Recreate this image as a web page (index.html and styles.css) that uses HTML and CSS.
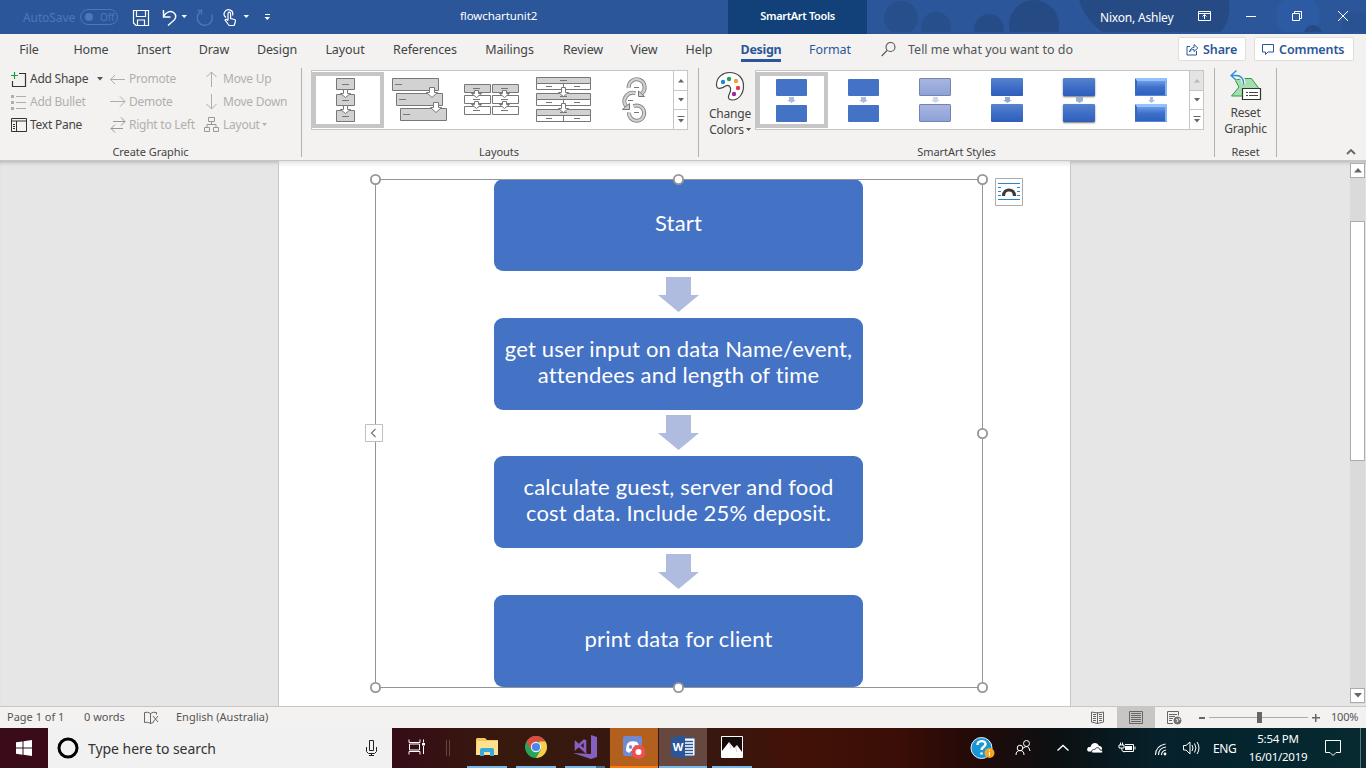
FILE: index.html
```html
<!DOCTYPE html>
<html lang="en">
<head>
<meta charset="utf-8">
<title>flowchartunit2</title>
<link rel="stylesheet" href="styles.css">
</head>
<body>
<div class="screen">
<header class="titlebar">
  <div class="quick">
    <span class="autosave">AutoSave</span>
    <span class="toggle"><i></i>Off</span>
    <svg class="qicons" width="150" height="34" viewBox="130 0 150 34" fill="none" stroke="#fff">
      <path d="M133.500 10.500h15v15h-12.500l-2.500-2.500zM136.500 10.500v6h9v-6M137.500 25v-5h7v5" stroke-width="1.200"/>
      <path d="M163.500 10v7h7M163.500 16.500c3-5 7-6 10-4c4 3 2 7-1 9l-4.500 4" stroke-width="1.400"/>
      <path d="M181.500 15h5.500l-2.750 3zM243.500 15h5.500l-2.750 3zM264.500 17h5.500l-2.750 3z" fill="#fff" stroke="none"/><path d="M265 14.500h5"/>
      <path d="M211.500 14.500a7.500 7.500 0 1 1-11.500-2.500M197.500 10.500h4v4" stroke="#4c78b9" stroke-width="1.400"/>
      <path d="M226 17.500a4.300 4.300 0 1 1 6.500-2M228 20v-6c0-2.500 2.600-2.500 2.600 0v4.500l4 1c1 .3 1 1.500.5 3l-1 3h-5l-4-5.500c1-1 2-.5 3 .8" stroke-width="1.200"/>
    </svg>
  </div>
  <div class="doctitle">flowchartunit2</div>
  <div class="context">SmartArt Tools</div>
  <div class="account">
    <svg class="pattern" width="499" height="34" viewBox="867 0 499 34"><g fill="#264a83"><g opacity=".6"><circle cx="901" cy="18" r="17"/><circle cx="936" cy="27" r="15"/></g><circle cx="989" cy="29" r="15" opacity=".8"/><circle cx="1034" cy="25" r="25"/><path d="M1079 0h150q3 20-10 34h-114q-20-14-26-34z"/><circle cx="1360" cy="30" r="19" opacity=".35"/></g><circle cx="1298" cy="16" r="22" fill="#2c5ba3"/><circle cx="1313" cy="34" r="9" fill="#264a83"/><path d="M867 33h499" stroke="#2a5699" stroke-width="2"/></svg>
    <span class="username">Nixon, Ashley</span>
    <svg class="winicons" width="166" height="34" viewBox="1200 0 166 34" fill="none" stroke="#fff"><path d="M1198.500 11.500h12v9h-12zM1198.500 13.500h12M1204.500 19v-4.500M1202.500 16.500l2-2l2 2M1246 16.500h10M1292.500 13.500h7v7h-7zM1294.500 13.500v-2h7v7h-2M1338 11l10 10M1348 11l-10 10"/></svg>
  </div>
</header>
<nav class="tabs">
  <div class="tablist"><span>File</span><span>Home</span><span>Insert</span><span>Draw</span><span>Design</span><span>Layout</span><span>References</span><span>Mailings</span><span>Review</span><span>View</span><span>Help</span><span class="active"><b>Design</b></span><span class="blue">Format</span></div>
  <div class="tell"><svg width="16" height="16" fill="none" stroke="#555" stroke-width="1.100"><circle cx="9.500" cy="6" r="4.500"/><path d="M6 9.500L.7 15"/></svg><span>Tell me what you want to do</span></div>
  <div class="tabbuttons">
    <button class="share"><svg width="13" height="13" fill="none" stroke="#2b579a"><path d="M4 3.500H1v8.500h9.500V8M3.500 9C4 6 6 4.500 8 4.500v-3L11.800 5L8 8.500v-2C6 6.500 4.500 7 3.500 9z"/></svg>Share</button>
    <button class="comments"><svg width="13" height="13" fill="none" stroke="#2b579a"><path d="M.5 1.500h11v7.500H6L3.500 11.500V9h-3z"/></svg>Comments</button>
  </div>
</nav>
<section class="ribbon">
  <div class="group create">
    <div class="commands">
      <span class="cmd"><svg width="18" height="18"><path d="M9 3.500h6.500v13h-13V11" fill="none" stroke="#333" stroke-width="1.200"/><path d="M4.500 2v7M1 5.500h7" stroke="#1b9c4c" stroke-width="1.200"/></svg><em class="w-add">Add Shape</em><svg class="caret" width="6" height="4"><path d="M0 0h6L3 3.500z" fill="#555"/></svg></span>
      <span class="cmd off"><svg width="16" height="18" fill="none" stroke="#b0aeac"><path d="M0.500 9.500l4.500-4.500M.5 9.500l4.500 4.500M.5 9.500h14.500" /></svg><em>Promote</em></span>
      <span class="cmd off"><svg width="16" height="18" fill="none" stroke="#b0aeac"><path d="M7.500 17V2M2.500 7l5-5l5 5"/></svg><em>Move Up</em></span>
      <span class="cmd off"><svg width="18" height="18"><path d="M6 3.500h10M6 9.500h10M6 15.500h10" stroke="#b0aeac"/><path d="M1 2h3v3H1zM1 8h3v3H1zM1 14h3v3H1z" fill="#b0aeac"/></svg><em>Add Bullet</em></span>
      <span class="cmd off"><svg width="16" height="18" fill="none" stroke="#b0aeac"><path d="M0 8.500h15M10 3.500l5 5l-5 5"/></svg><em>Demote</em></span>
      <span class="cmd off"><svg width="16" height="18" fill="none" stroke="#b0aeac"><path d="M7.500 1v15M2.500 11l5 5l5-5"/></svg><em>Move Down</em></span>
      <span class="cmd"><svg width="18" height="18" fill="none" stroke="#333"><path d="M1.500 2.500h15v13h-15zM1.500 5h15M6.500 5v10.500M3 8.500h2M3 10.500h2M3 12.500h2"/></svg><em>Text Pane</em></span>
      <span class="cmd off"><svg width="16" height="18" fill="none" stroke="#9a9896"><path d="M3 5.500h12M11 1.500l4 4l-4 4M13 12.500H1M5 8.500l-4 4l4 4"/></svg><em>Right to Left</em></span>
      <span class="cmd off"><svg width="16" height="18" fill="none" stroke="#9a9896"><path d="M4.500 1.500h6v4h-6zM.5 11.500h5v4h-5zM9.500 11.500h5v4h-5zM7.500 5.500v3M3 11.500v-3h9v3"/></svg><em>Layout</em><svg class="caret tight" width="5" height="4"><path d="M0 0h5L2.500 3z" fill="#b0aeac"/></svg></span>
    </div>
    <div class="glabel">Create Graphic</div>
  </div>
  <div class="group layouts">
    <div class="gallery">
      <div class="cell selected"><svg width="72" height="58" viewBox="312 71 72 58" fill="#d2d2d2" stroke="#777"><path d="M336.500 78.500h18v11h-18zM336.500 94.500h18v11h-18zM336.500 110.500h18v11h-18zM342 84.500h7M342 100.500h7M342 116.500h7"/><path id="a" fill="#fff" d="M343.500 89.500h4v4h3l-5 4l-5-4h3z"/><use href="#a" y="16"/></svg></div>
      <div class="cell"><svg width="72" height="58" viewBox="384 71 72 58" fill="#d2d2d2" stroke="#777"><path d="M392.500 78.500h46v12h-46zM396.500 93.500h46v12h-46zM400.500 108.500h46v12h-46zM395 84.500h7M399 99.500h7M403 114.500h7"/><path id="b" fill="#fff" d="M429.500 87.500h5v5h3l-5.500 5l-5.500-5h3z"/><use href="#b" x="4" y="15"/></svg></div>
      <div class="cell"><svg width="72" height="58" viewBox="456 71 72 58" fill="#fff" stroke="#777"><g id="c"><path d="M464.500 84.500h26v8h-26z" fill="#d2d2d2"/><path d="M464.500 95.500h26v8h-26zM464.500 106.500h26v8h-26zM473 88.500h7M473 99.500h7M473 110.500h7"/><path d="M474.500 90.500h4v3h3l-5 4l-5-4h3zM474.500 101.500h4v3h3l-5 4l-5-4h3z"/></g><use href="#c" x="28"/></svg></div>
      <div class="cell"><svg width="72" height="58" viewBox="528 71 72 58" fill="#fff" stroke="#777"><g id="d"><path d="M536.500 77.500h54v6h-54z" fill="#d2d2d2"/><path d="M536.500 83.500h54v6h-54zM563.500 83.500v6M560 80.500h7M546 86.500h6M574 86.500h6"/></g><use href="#d" y="16"/><use href="#d" y="32"/><path id="e" d="M561.500 87.500h4v5h3l-5 4l-5-4h3z"/><use href="#e" y="16"/></svg></div>
      <div class="cell"><svg width="72" height="58" viewBox="600 71 72 58" fill="none"><g stroke="#858585" stroke-width="4"><path id="f" d="M628.700 88a8 8 0 1 1 13 5.500M635.500 93.200a8.500 8.500 0 0 0-9.500 13M629 112.500a7.600 7.600 0 1 0 4.500-6.300"/></g><use href="#f" stroke="#d2d2d2" stroke-width="2.200"/><path d="M638.500 91v5.500h6zM622.500 109.500h7v-6z" fill="#d2d2d2" stroke="#777"/><path d="M634 87.500h5M628 100.500h5M634 112.500h5" stroke="#777"/></svg></div>
      <div class="scroller"><span><svg width="6" height="4"><path d="M0 3.500h6L3 0z" fill="#666"/></svg></span><span><svg width="6" height="4"><path d="M0 0h6L3 3.500z" fill="#666"/></svg></span><span><svg width="8" height="7"><path d="M1 3h6L4 6.500zM.5 0h7v1h-7z" fill="#666"/></svg></span></div>
    </div>
    <div class="glabel">Layouts</div>
  </div>
  <div class="group styles">
    <div class="stylerow">
    <div class="bigbtn colors"><svg width="30" height="30" viewBox="0 0 30 30"><path d="M1.500 13C2 6 8 1.500 14.500 1.500C23 1.500 28.500 7 28.500 15c0 8-5 14-11 14c-7 0-3-6-2-9c1-4-2-7-5-5C8 17 1 20 1.500 13z" fill="#fff" stroke="#444" stroke-width="1.200"/><circle cx="8" cy="11" r="2.200" fill="#1e8bcd"/><circle cx="14" cy="8" r="2.200" fill="#1fa34a"/><circle cx="21" cy="10" r="2.200" fill="#fb983b"/><circle cx="23" cy="17" r="2.200" fill="#e8393c"/><circle cx="19" cy="23" r="2.200" fill="#922c9d"/></svg><span>Change</span><span>Colors<svg class="caret" width="5" height="4"><path d="M0 0h5L2.500 3z" fill="#555"/></svg></span></div>
    <div class="gallery">
      <div class="cell selected"><div class="mini"><i></i><svg width="9" height="6"><path d="M2 0h5v3h2L4.500 6L0 3h2z" fill="#adbbe0"/></svg><i></i></div></div>
      <div class="cell"><div class="mini"><i></i><svg width="9" height="6"><path d="M2 0h5v3h2L4.500 6L0 3h2z" fill="#adbbe0"/></svg><i></i></div></div>
      <div class="cell"><div class="mini pale"><i></i><svg width="9" height="6"><path d="M2 0h5v3h2L4.500 6L0 3h2z" fill="#cfd7ed"/></svg><i></i></div></div>
      <div class="cell"><div class="mini deep"><i></i><svg width="9" height="6"><path d="M2 0h5v3h2L4.500 6L0 3h2z" fill="#93a8da"/></svg><i></i></div></div>
      <div class="cell"><div class="mini deep shadow"><i></i><svg width="9" height="6"><path d="M1 0h7v4L4.500 6L1 4z" fill="#9dafd9"/></svg><i></i></div></div>
      <div class="cell"><div class="mini bevel"><i></i><svg width="9" height="6"><path d="M3 0h3v3h2L4.500 6L1 3h2z" fill="#adbbe0"/></svg><i></i></div></div>
      <div class="scroller"><span class="dis"><svg width="6" height="4"><path d="M0 3.500h6L3 0z" fill="#b8b8b8"/></svg></span><span><svg width="6" height="4"><path d="M0 0h6L3 3.500z" fill="#666"/></svg></span><span><svg width="8" height="7"><path d="M1 3h6L4 6.500zM.5 0h7v1h-7z" fill="#666"/></svg></span></div>
    </div>
    </div>
    <div class="glabel">SmartArt Styles</div>
  </div>
  <div class="group reset">
    <div class="bigbtn"><svg width="32" height="32" viewBox="0 0 32 32"><path d="M13 8.500h8.500L30 20v6H1.500L9 17l-4-7z" fill="#a3dfae" stroke="#36964f"/><path d="M1 5.500h5c5 0 8 3 7.500 8.500M6 1L1 5.500L6 10" fill="none" stroke="#f3f2f1" stroke-width="4"/><path d="M1 5.500h5c5 0 8 3 7.500 9M6.500 .5L1 5.500L6 10" fill="none" stroke="#2d8fd0" stroke-width="1.400"/><path d="M12.500 18.500h18v11h-18z" fill="#fff" stroke="#333" stroke-width="1.200"/><path d="M16 22.500h2M19 22.500h9M16 25.500h2M19 25.500h9" stroke="#444"/></svg><span>Reset</span><span>Graphic</span></div>
    <div class="glabel">Reset</div>
  </div>
  <svg class="collapse" width="10" height="6" fill="none" stroke="#666" stroke-width="1.800"><path d="M1 5l4-4l4 4"/></svg>
</section>
<main class="canvas">
  <div class="page">
    <div class="smartart">
      <div class="node">Start</div>
      <svg class="arrow" width="41" height="35"><path d="M8 0h25v18h8L20.500 35L0 18h8z"/></svg>
      <div class="node">get user input on data Name/event,<br>attendees and length of time</div>
      <svg class="arrow" width="41" height="35"><path d="M8 0h25v18h8L20.500 35L0 18h8z"/></svg>
      <div class="node">calculate guest, server and food<br>cost data. Include 25% deposit.</div>
      <svg class="arrow" width="41" height="35"><path d="M8 0h25v18h8L20.500 35L0 18h8z"/></svg>
      <div class="node">print data for client</div>
      <svg class="handles" width="622" height="524" viewBox="368 172 622 524" fill="#fff" stroke="#959595" stroke-width="1.800"><path d="M375.500 179.500h607v508h-607z" fill="none" stroke-width="1"/><circle cx="375.500" cy="179.500" r="4.600"/><circle cx="678.500" cy="179.500" r="4.600"/><circle cx="982.500" cy="179.500" r="4.600"/><circle cx="982.500" cy="433.500" r="4.600"/><circle cx="375.500" cy="687.500" r="4.600"/><circle cx="678.500" cy="687.500" r="4.600"/><circle cx="982.500" cy="687.500" r="4.600"/></svg>
      <svg class="pane-toggle" width="18" height="18"><path d="M.5.500h17v17H.5z" fill="#fff" stroke="#c0c0c0"/><path d="M10.500 5l-4 4l4 4" fill="none" stroke="#777" stroke-width="1.200"/></svg>
      <svg class="layout-opt" width="28" height="28"><path d="M.5.500h27v27H.5z" fill="#fff" stroke="#ababab"/><path d="M3 5.500h22M3 9.500h3M22 9.500h3M3 13.500h3M22 13.500h3M3 17.500h3M22 17.500h3M3 21.500h22" stroke="#2a86c0"/><path d="M8.500 18c0-8 11-8 11 0" fill="none" stroke="#3b3b3b" stroke-width="3.200"/></svg>
    </div>
  </div>
  <div class="vscroll"><span><svg width="8" height="5"><path d="M0 4.500h8L4 0z" fill="#666"/></svg></span><i></i><span><svg width="8" height="5"><path d="M0 0h8L4 4.500z" fill="#666"/></svg></span></div>
</main>
<footer class="status">
  <span class="s-page">Page 1 of 1</span><span class="s-words">0 words</span>
  <svg class="proof" width="15" height="14" fill="none" stroke="#666"><path d="M6.500 2.500Q4 .5.500 1.500v10q3.500-1 6 1v-10Q9 .5 12.500 1.500v2M6.500 12.500l3-1M9 5l5 6M14 5l-5 6" /></svg>
  <span class="s-lang">English (Australia)</span>
  <div class="views">
    <span><svg width="14" height="14" fill="none" stroke="#666"><path d="M6.500 2L.5 1v10l6 1.500l6-1.500V1zM6.500 1v12M2 3.500h3M2 5.500h3M2 7.500h3M2 9.500h3M8 3.500h3M8 5.500h3M8 7.500h3M8 9.500h3"/></svg></span>
    <span class="on"><svg width="14" height="14" fill="none" stroke="#666"><path d="M.5.500h13v12H.5zM2 2.500h10M2 4.500h10M2 6.500h10M2 8.500h10M2 10.500h10"/></svg></span>
    <span><svg width="15" height="14" fill="none" stroke="#666"><path d="M6 12.500H.5V.5h11v4M2 3.500h8M2 5.500h6M2 7.500h4M2 9.500h3"/><circle cx="10.500" cy="9.500" r="3.500" fill="#777"/><path d="M9 8l2 1l-1 2M12 7l1 2" stroke="#eee"/></svg></span>
  </div>
  <svg class="zoomer" width="122" height="22" viewBox="1198 706 122 22"><path d="M1209 716.500h99" stroke="#aaa"/><path d="M1199 716h6v2h-6zM1312 716h8v1.500h-8zM1315 713h1.500v8h-1.500zM1257 711h5v11h-5z" fill="#666"/></svg>
  <span class="s-zoom">100%</span>
</footer>
<div class="taskbar">
  <div class="start"><svg width="16" height="16" fill="#fff"><path d="M0 2.300L6.500 1.400V7.500H0zM7.500 1.200L16 0v7.500H7.500zM0 8.500h6.500v6.200L0 13.800zM7.500 8.500H16V16l-8.500-1.200z"/></svg></div>
  <div class="search"><svg width="22" height="22"><circle cx="11" cy="11" r="9" fill="none" stroke="#000" stroke-width="3"/></svg><span>Type here to search</span><svg class="mic" width="11" height="16" fill="none" stroke="#222"><path d="M3.500.5h4v10h-4zM.5 7v4.500l2 2h6l2-2V7M5.500 13.500v2M3 15.500h5"/></svg></div>
  <div class="apps">
    <div class="app view"><svg width="17" height="16" fill="none" stroke="#fff"><path d="M1 .5v3h11v-3M1 15.500v-3h11v3M1.500 5h10v6h-10zM15.500.5v3M15.500 7v8"/><path d="M14 4h3v2.500h-3z" fill="#fff" stroke="none"/></svg></div>
    <div class="grip"></div>
    <div class="app run"><svg width="22" height="20"><path d="M0 2l1-1h8l2 2h11v15H0z" fill="#f3c85c"/><path d="M1 4h21v14H0z" fill="#fde18e"/><path d="M4 19v-6q0-2 2-2h10q2 0 2 2v6h-4v-4H8v4z" fill="#37a9df"/></svg></div>
    <div class="app run"><svg width="22" height="22"><circle cx="11" cy="11" r="11" fill="#27a35a"/><path d="M1.500 5.500A11 11 0 0 1 20.500 5.500H11L6 13.500z" fill="#e04a3f"/><path d="M20.500 5.500A11 11 0 0 1 11 22l5-8.500L14 5.500z" fill="#fccd47"/><circle cx="11" cy="11" r="5.200" fill="#f4f4f4"/><circle cx="11" cy="11" r="4.100" fill="#4688ef"/></svg></div>
    <div class="app multi"><svg width="24" height="24"><path d="M18 0l6 2v20l-6 2L0 18l18 1z" fill="#865fc5"/><path d="M12 5v11L3 8v5L12 5" fill="none" stroke="#865fc5" stroke-width="2.600"/></svg></div>
    <div class="app discord"><svg width="24" height="24"><rect x="1" y="1" width="19" height="20" rx="2" fill="#7288cf"/><path d="M4 16c0-5 1-8 3-9q4-1.500 8 0c2 2 3 6 2 9l-3 2l-2-2H9l-2 2z" fill="#fff"/><ellipse cx="8.500" cy="12" rx="1.600" ry="2" fill="#7288cf"/><ellipse cx="14" cy="12" rx="1.600" ry="2" fill="#7288cf"/><circle cx="16.500" cy="17" r="7" fill="#ee5050"/><circle cx="16.500" cy="17" r="3" fill="#fff"/></svg></div>
    <div class="app word"><svg width="24" height="24"><path d="M13 3h11v18H13z" fill="#fff" stroke="#2a5699"/><path d="M14 6.500h8M14 9.500h8M14 12.500h8M14 15.500h8M14 18.500h8" stroke="#2a5699" stroke-width="1.400"/><path d="M0 3L14 0v24L0 21z" fill="#2a5699"/><text x="7" y="16" text-anchor="middle" class="wletter">W</text></svg></div>
    <div class="app run photos"><svg width="22" height="22"><path d="M.5.500h21v21H.500z" fill="#160b09" stroke="#fff"/><path d="M1 15l7-9l5 6l3-3l5 7v5H1z" fill="#fff"/><path d="M8 7l2 4l-1 2M15 10v3l1 3" stroke="#bbb" fill="none" stroke-width=".7"/></svg></div>
  </div>
  <div class="tray">
    <svg width="256" height="40" viewBox="960 728 256 40" fill="none" stroke="#fff"><circle cx="981.500" cy="748" r="10.500" fill="#1a96d5" stroke="#e4f4fb"/><path d="M977.500 745c0-5 8-5 8-1c0 3-4 3-4 6M981.500 752.500v2" stroke-width="2.400"/><circle cx="989.500" cy="753" r="5" fill="#f6a623" stroke="none"/><path d="M989.500 750v1M989.500 752v4"/><circle cx="1020" cy="748" r="2.800"/><circle cx="1026.500" cy="743.500" r="3"/><path d="M1016 755q0-4.500 4-4.500t4 4.500M1022.500 748.500q6-5 7.500 2.500"/><path d="M1057.500 750.500l5.500-5l5.500 5" stroke-width="1.400"/><path d="M1088 751.500c-2-3 0-5 2.500-4.500c1-5 7-5 8.500-1c3 0 4 2.500 2 5.500z" fill="#fff" stroke="none"/><path d="M1092 753c-1-3 1-4 3-3.500c1-3 5-2 5 .5c3 0 3 2 2 3z" fill="#fff" stroke="#06151b" stroke-width=".8"/><path d="M1125 744.500h8.500v7H1124M1135 746.500v3M1119 745v3h5v-3zM1120.500 745v-2.500M1122.500 745v-2.500M1121.500 748q0 4 3 4"/><path d="M1125 746h7v4h-7z" fill="#fff" stroke="none"/><path d="M1155.500 755q0-9 10-11M1158.500 755q0-7 7.500-8M1161.500 755q0-4 4.500-5" stroke-width="1.100"/><circle cx="1165" cy="754" r="1.400" fill="#fff" stroke="none"/><path d="M1183.500 745.500h2.500l4-3.500v12l-4-4h-2.500zM1192 745q2 3 0 6M1194.500 743.500q3 4.500 0 9M1197 742q4 6 0 12"/></svg>
    <span class="eng">ENG</span>
    <div class="clock"><span class="time">5:54 PM</span><span class="date">16/01/2019</span></div>
    <svg class="notice" width="16" height="17" fill="none" stroke="#fff"><path d="M.5.500h15v12H11L8 15.500L5 12.500H.5z"/></svg>
    <i class="desk"></i>
  </div>
</div>
</div>
</body>
</html>
```
FILE: styles.css
```css
*{box-sizing:border-box}
body{margin:0;font-family:"Noto Sans","Open Sans",sans-serif;font-size:12px;color:#444;overflow:hidden}
svg{display:block;flex:none}
span,em,b{white-space:nowrap}
em{font-style:normal}
.screen{width:1366px;height:768px;display:flex;flex-direction:column;overflow:hidden}
.titlebar{height:34px;flex:none;background:#2b579a;color:#fff;display:grid;grid-template-columns:290px 438px 139px 499px;font-size:11.5px;letter-spacing:-.1px}
.quick{display:flex;align-items:center;padding-left:23px}
.autosave{color:#4c78b9;width:57px;font-size:12px;letter-spacing:-.1px}
.toggle{width:38px;height:16px;border:1px solid #4c78b9;border-radius:8px;color:#4c78b9;display:flex;align-items:center;font-size:10px;gap:7px;padding-left:4px}
.toggle i{width:8px;height:8px;border-radius:50%;background:#4c78b9}
.qicons{margin-left:12px}
.doctitle{display:flex;align-items:center;padding-left:170px;padding-bottom:3px}
.context{background:#124078;display:flex;align-items:center;justify-content:center;padding-bottom:3px;font-weight:600;font-size:11px;letter-spacing:-.35px}
.account{display:flex;align-items:center;position:relative}
.pattern{position:absolute;left:0;top:0}
.username{position:relative;padding-left:233px;width:333px;font-size:12px;letter-spacing:-.2px}
.winicons{position:relative;overflow:visible}
.tabs{height:32px;flex:none;background:#f3f2f1;display:flex;align-items:center;font-size:12.5px;letter-spacing:-.1px}
.tablist{display:grid;grid-template-columns:38px 86px 40px 80px 46px 90px 70px 99px 48px 74px 36px 88px 50px;padding-left:10px;height:32px}
.tablist span{display:flex;justify-content:center;align-items:center;padding-bottom:2px}
.active,.blue{color:#2b579a}
.tablist .active{padding:0}
.active b{height:24px;line-height:17px;padding-top:3px;border-bottom:3px solid #2b579a;letter-spacing:-.3px}
.tell{display:flex;align-items:center;width:324px;padding-left:26px;gap:11px;letter-spacing:0;color:#555;padding-bottom:2px}
.tabbuttons{display:flex;gap:8px;margin-bottom:2px}
.tabbuttons button{height:24px;border:1px solid #e1dfdd;border-radius:2px;background:#fff;color:#2b579a;font:600 12.5px "Noto Sans",sans-serif;display:flex;align-items:center;padding:0 0 0 7px;gap:4px;letter-spacing:-.1px}
.tabbuttons .share{width:68px;margin-left:-1px}
.tabbuttons .comments{width:100px}
.ribbon{height:95px;flex:none;background:#f3f2f1;border-bottom:1px solid #c8c6c4;display:flex;position:relative}
.group{height:89px;margin-top:2px;border-right:1px solid #b3b0ad;display:flex;flex-direction:column;justify-content:space-between}
.glabel{text-align:center;font-size:11px;line-height:12px;color:#444;margin-bottom:-1px;white-space:nowrap;letter-spacing:-.05px}
.create{width:302px}
.commands{display:grid;grid-template-columns:100px 94px 95px;grid-auto-rows:23px;padding-left:10px;margin-top:-1px}
.cmd{display:flex;align-items:center;gap:3px;font-size:12px;letter-spacing:-.25px}
.cmd:nth-child(3n+1){gap:2px}
.w-add{width:63px}
.off{color:#b1afad}
.caret{display:inline-block;margin-left:2px;vertical-align:middle}
.caret.tight{margin-left:-1px}
.layouts{width:397px;padding-left:9px}
.gallery{height:60px;margin-top:2px;border:1px solid #c6c6c6;background:#fff;display:flex}
.layouts .gallery{width:377px}
.layouts .glabel{padding-right:11px}
.cell{width:72px;height:58px;display:flex;justify-content:center;flex:none;align-items:center}
.cell.selected{outline:4px solid #c6c6c6;outline-offset:-4px;height:56px;margin-top:1px}
.scroller{width:14px;margin-left:auto;border-left:1px solid #c6c6c6;display:grid;grid-template-rows:20px 19px 19px}
.scroller span{display:flex;align-items:center;justify-content:center;border-bottom:1px solid #c6c6c6}
.scroller span:last-child{border:0}
.scroller .dis{background:#e4e4e4}
.styles{width:516px}
.stylerow{display:flex}
.styles .gallery{width:449px}
.styles .cell{align-items:flex-start;padding:7px 2px 0 0}
.styles .cell.selected{padding-top:6px}
.bigbtn{display:flex;flex-direction:column;align-items:center;line-height:16px;padding-top:3px;font-size:12px;letter-spacing:-.2px}
.bigbtn>svg{margin-bottom:5px}
.reset .bigbtn{padding-top:2px}
.reset .bigbtn>svg{margin-bottom:3px}
.colors{width:56px;padding-left:6px}
.mini{width:32px;display:flex;flex-direction:column;align-items:center;gap:1px}
.mini i{width:31px;height:17px;margin:1px 0 0 1px;align-self:flex-start;background:#4472c4;border-radius:1px}
.mini.pale i,.mini.deep i,.mini.bevel i{width:32px;height:18px;margin:0}
.mini.pale i{background:linear-gradient(#a8b5e0,#8ea2d8);border:1px solid #7684ad}
.mini.deep i{background:linear-gradient(#5784cb,#3f6ec8 50%,#2e5eb8)}
.mini.shadow i{box-shadow:0 1px 2px #777}
.mini.bevel i{background:linear-gradient(#699be9,#3f70c8 45%,#2e60bd);border:solid;border-width:3px 2px 1px;border-color:#94c2fa #84b4f0 #5189dd #3968b7}
.reset{width:62px}
.bigbtn>span{display:flex;align-items:center}
.collapse{position:absolute;left:1346px;top:83px}
.canvas{height:545px;flex:none;background:#e6e6e6;display:flex;justify-content:space-between;overflow:hidden;box-shadow:inset 0 4px 4px -3px #aaa}
.page{width:793px;margin-left:278px;height:546px;background:linear-gradient(#e5e5e5,#fff 6px);border:solid #c8c8c8;border-width:0 1px;padding:18px 0 0 96px}
.smartart{width:607px;height:508px;display:flex;flex-direction:column;align-items:center;justify-content:space-between;position:relative}
.node{width:369px;height:92px;border-radius:9px;background:#4472c4;color:#fff;font:22px/26px Lato,sans-serif;letter-spacing:.17px;display:flex;align-items:center;justify-content:center;text-align:center;padding-bottom:4px;white-space:nowrap}
.arrow{fill:#afbbdf}
.handles{position:absolute;left:-7px;top:-7px}
.pane-toggle{position:absolute;left:-10px;top:245px}
.layout-opt{position:absolute;left:620px;top:-1px}
.vscroll{width:16px;display:flex;flex-direction:column;padding:2px 0 3px;background:linear-gradient(#dadada,#dadada) 0 3px/15px 540px no-repeat}
.vscroll span{width:15px;height:15px;border:1px solid #ababab;background:#fff;display:flex;align-items:center;justify-content:center}
.vscroll i{width:15px;height:240px;background:#fff;border:1px solid #ababab;margin:43px 0 auto}
.status{height:22px;flex:none;background:#f3f2f1;border-top:1px solid #c8c6c4;display:flex;align-items:center;font-size:11px;color:#555}
.status>span{padding-bottom:2px}
.s-page{width:84px;padding-left:7px}
.s-words{width:60px}
.s-lang{margin-left:17px}
.views{display:flex;height:21px}
.views span{width:38px;display:flex;align-items:center;justify-content:center}
.views .on{background:#c8c6c4}
.zoomer{margin-left:5px}
.s-zoom{margin-left:11px;width:35px;letter-spacing:-.2px}
.status>.s-lang{flex:1}
.taskbar{height:40px;flex:none;display:flex;color:#fff;background:linear-gradient(90deg,#3a0b18 0,#350b17 390px,#38190d 500px,#351811 700px,#421207 790px,#3a0e06 900px,#240a09 970px,#0b1013 1060px,#06212b 1160px,#03262f 1270px,#082a30)}
.start{width:48px;display:flex;align-items:center;justify-content:center}
.search{width:344px;background:#f1f1f1;color:#333;display:flex;align-items:center;padding-left:9px;gap:9px;font-size:14px;letter-spacing:-.05px}
.mic{margin-left:auto;margin-right:15px}
.apps{display:flex;width:568px}
.app{width:48px;height:40px;display:flex;align-items:center;justify-content:center;border-bottom:2px solid transparent;margin-right:1px}
.app.run{background:linear-gradient(#76b9ed,#76b9ed) 4px 38px/40px 2px no-repeat;background-clip:border-box}
.grip{width:4px;height:16px;border:solid #65443a;border-width:0 1px;margin:12px 13px 0 5px}
.multi{background:linear-gradient(90deg,#76b9ed 31px,#4a7192 31px) 4px 38px/40px 2px no-repeat}
.discord{background:#b3601f;border-color:#ff7a0a}
.word{background:#66483e;border-color:#76b9ed}
.wletter{fill:#fff;font:bold 11px "Noto Sans",sans-serif;letter-spacing:0}
.tray{display:flex;align-items:center;flex:1}
.eng{width:28px;margin-left:-3px;font-size:12px;letter-spacing:-.4px}
.clock{width:74px;display:flex;flex-direction:column;align-items:center;line-height:18px;font-size:11.5px;letter-spacing:-.25px}
.notice{margin-left:10px}
.desk{width:1px;height:40px;background:#607579;margin-left:19px}
```
